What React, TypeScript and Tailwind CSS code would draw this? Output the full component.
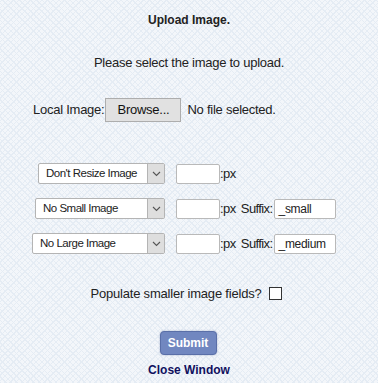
import React from "react";

function Chevron() {
  return (
    <svg width="9" height="6" viewBox="0 0 9 6" className="block">
      <path d="M1 1 L4.5 4.5 L8 1" fill="none" stroke="#555" strokeWidth="1.1" />
    </svg>
  );
}

function FakeSelect({ label, width }: { label: string; width: number }) {
  return (
    <div
      className="flex h-[21px] items-stretch rounded-[2px] border border-[#b4b4b4] bg-white"
      style={{ width }}
    >
      <div className="flex-1 overflow-hidden whitespace-nowrap pl-[7px] text-[11.5px] leading-[19px] tracking-[-0.5px] text-[#222]">
        {label}
      </div>
      <div className="flex w-[17px] items-center justify-center border-l border-[#b4b4b4] bg-[#dedede]">
        <Chevron />
      </div>
    </div>
  );
}

function TextBox({ width, value }: { width: number; value?: string }) {
  return (
    <div
      className="h-[20px] whitespace-nowrap rounded-[2px] border border-[#b9b9b9] bg-white pl-[4px] text-[12px] leading-[18px] tracking-[-0.3px] text-[#222]"
      style={{ width }}
    >
      {value}
    </div>
  );
}

function SizeRow({
  label,
  selectWidth,
  suffix,
}: {
  label: string;
  selectWidth: number;
  suffix?: string;
}) {
  return (
    <div className="flex h-[21px] items-center">
      <div className="flex w-[165px] shrink-0 justify-end">
        <FakeSelect label={label} width={selectWidth} />
      </div>
      <div className="ml-[11px]">
        <TextBox width={44} />
      </div>
      <span className="text-[13px] tracking-[-0.5px]">:px</span>
      {suffix !== undefined && (
        <>
          <span className="ml-[5px] text-[13px] tracking-[-0.6px]">Suffix:</span>
          <div className="ml-[1px]">
            <TextBox width={62} value={suffix} />
          </div>
        </>
      )}
    </div>
  );
}

export default function App() {
  return (
    <main className="h-[383px] w-[378px] overflow-hidden bg-[#f3f6fa] bg-[image:repeating-linear-gradient(45deg,#e5ecf4_0,#e5ecf4_1px,transparent_1px,transparent_4px),repeating-linear-gradient(-45deg,#e5ecf4_0,#e5ecf4_1px,transparent_1px,transparent_4px)] font-['Liberation_Sans',Arial,sans-serif] text-[#222]">
      <h1 className="pt-[13px] text-center text-[12px] font-bold leading-[14px]">
        Upload Image.
      </h1>

      <p className="mt-[28px] text-center text-[13px] leading-[15px] tracking-[-0.25px]">
        Please select the image to upload.
      </p>

      {/* file picker */}
      <div className="mt-[28px] flex h-[24px] items-center pl-[33px] text-[13px] tracking-[-0.25px]">
        <span>Local Image:</span>
        <div className="ml-[1px] flex h-[24px] w-[76px] items-center justify-center border border-[#adadad] bg-[#e1e1e1] text-[#111]">
          Browse...
        </div>
        <span className="ml-[6px]">No file selected.</span>
      </div>

      {/* size rows */}
      <div className="mt-[41px] flex flex-col gap-[14px]">
        <SizeRow label="Don't Resize Image" selectWidth={127} />
        <SizeRow label="No Small Image" selectWidth={130} suffix="_small" />
        <SizeRow label="No Large Image" selectWidth={133} suffix="_medium" />
      </div>

      <div className="mt-[33px] flex h-[13px] items-center justify-center gap-[7px] pr-[6px] text-[13px] tracking-[-0.2px]">
        <span>Populate smaller image fields?</span>
        <div className="h-[13px] w-[13px] border border-[#333] bg-white" />
      </div>

      <div className="mt-[31px] flex justify-center">
        <button className="ml-[-2px] h-[24px] w-[57px] rounded-[4px] border border-[#5a6fa8] bg-[#7187c0] text-[12px] font-bold text-white shadow-[0_0_2px_rgba(80,100,160,0.5)]">
          Submit
        </button>
      </div>

      <div className="mt-[8px] text-center text-[12px] font-bold leading-[14px] text-[#10105e]">
        Close Window
      </div>
    </main>
  );
}
